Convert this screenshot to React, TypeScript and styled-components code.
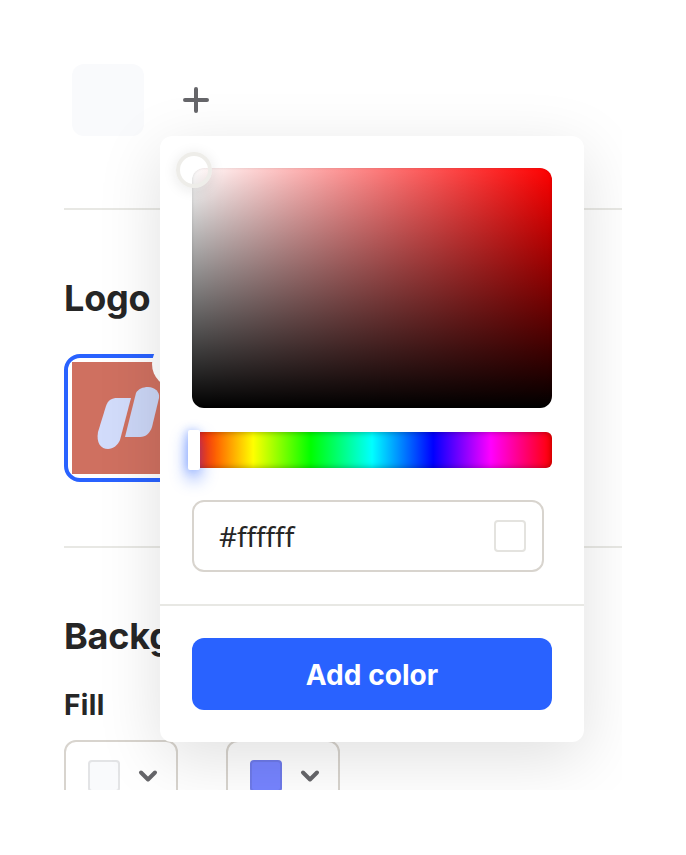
import React from "react";
import styled, { createGlobalStyle } from "styled-components";

const Global = createGlobalStyle`
  html, body { margin: 0; padding: 0; background: #fff; }
  body { font-family: Inter, "Liberation Sans", sans-serif; color: #262626; }
`;

const Page = styled.div`
  position: relative;
  width: 622px;
  height: 790px;
  overflow: hidden;
  background: #fff;
  padding: 64px 0 0 64px;
  box-sizing: border-box;
`;

const ColorRow = styled.div`
  display: flex;
  align-items: center;
  gap: 37px;
  padding-left: 8px;
`;

const ColorSwatch = styled.div`
  width: 72px;
  height: 72px;
  border-radius: 12px;
  background: #f9fafc;
`;

const PlusIcon = styled.svg`
  width: 30px;
  height: 30px;
  display: block;
`;

const Divider = styled.div<{ $top: number }>`
  height: 2px;
  background: #e8e8e4;
  margin-top: ${(p) => p.$top}px;
`;

const Heading = styled.h2<{ $top: number }>`
  margin: ${(p) => p.$top}px 0 0;
  font-size: 36px;
  line-height: 40px;
  font-weight: 700;
  letter-spacing: -0.2px;
  color: #262626;
`;

const LogoFrame = styled.div`
  width: 128px;
  height: 128px;
  margin-top: 36px;
  box-sizing: border-box;
  border: 4px solid #2962ff;
  border-radius: 16px;
  padding: 4px;
`;

const LogoImage = styled.div`
  width: 100%;
  height: 100%;
  display: flex;
  align-items: center;
  justify-content: center;
  background: #cf7060;
`;

const LogoMark = styled.svg`
  width: 66px;
  height: 66px;
  display: block;
`;

const DeleteBadge = styled.div`
  position: absolute;
  left: 152px;
  top: 340px;
  width: 48px;
  height: 48px;
  border-radius: 50%;
  background: #fff;
`;

const FillLabel = styled.div`
  margin-top: 33px;
  font-size: 28px;
  line-height: 32px;
  font-weight: 700;
  letter-spacing: 0.4px;
`;

const FillRow = styled.div`
  display: flex;
  gap: 48px;
  margin-top: 19px;
`;

const FillSelect = styled.div`
  width: 114px;
  height: 72px;
  box-sizing: border-box;
  border: 2px solid #d8d4ce;
  border-radius: 12px;
  padding: 0 17px 0 22px;
  display: flex;
  align-items: center;
  justify-content: space-between;
`;

const FillChip = styled.div<{ $color: string }>`
  width: 32px;
  height: 32px;
  box-sizing: border-box;
  border-radius: 4px;
  background: ${(p) => p.$color};
  border: 2px solid rgba(40, 40, 40, 0.1);
`;

const Chevron = styled.svg`
  width: 22px;
  height: 14px;
  display: block;
`;

const Popover = styled.div`
  position: absolute;
  left: 160px;
  top: 136px;
  width: 424px;
  height: 606px;
  box-sizing: border-box;
  background: #fff;
  border-radius: 12px;
  box-shadow: 0 16px 64px rgba(0, 0, 0, 0.125);
  padding: 32px 0;
  display: flex;
  flex-direction: column;
`;

const PickerBody = styled.div`
  padding: 0 32px;
`;

const Saturation = styled.div`
  position: relative;
  height: 240px;
  border-radius: 12px;
  background: linear-gradient(to top, #000, rgba(0, 0, 0, 0)),
    linear-gradient(to right, #fff, #f00);
  box-shadow: inset 0 0 3px rgba(0, 0, 0, 0.14);
`;

const SatThumb = styled.div`
  position: absolute;
  left: -16px;
  top: -16px;
  width: 36px;
  height: 36px;
  box-sizing: border-box;
  border-radius: 50%;
  border: 4px solid #eeede9;
  box-shadow: 0 2px 14px rgba(25, 25, 25, 0.1);
`;

const Hue = styled.div`
  position: relative;
  height: 36px;
  margin-top: 24px;
  border-radius: 6px;
  background: linear-gradient(
    to right,
    #f00 0%,
    #ff0 17%,
    #0f0 33%,
    #0ff 50%,
    #00f 67%,
    #f0f 83%,
    #f00 100%
  );
  box-shadow: inset 0 0 6px rgba(0, 0, 0, 0.35);
`;

const HueThumb = styled.div`
  position: absolute;
  left: -4px;
  top: -2px;
  width: 12px;
  height: 40px;
  border-radius: 2px;
  background: #fff;
  box-shadow: 0 8px 16px 2px rgba(41, 98, 255, 0.4), -2px 0 8px rgba(41, 98, 255, 0.3);
`;

const HexField = styled.div`
  width: 352px;
  height: 72px;
  margin-top: 32px;
  box-sizing: border-box;
  border: 2px solid #d8d4ce;
  border-radius: 12px;
  padding: 0 16px 0 25px;
  display: flex;
  align-items: center;
  justify-content: space-between;
`;

const HexText = styled.span`
  font-family: "Noto Sans", "Open Sans", sans-serif;
  font-size: 28px;
  color: #262626;
  letter-spacing: -0.1px;
`;

const HexChip = styled.div`
  width: 32px;
  height: 32px;
  box-sizing: border-box;
  border-radius: 4px;
  background: #fff;
  border: 2px solid #e4e3df;
`;

const PopDivider = styled.div`
  height: 2px;
  background: #e8e8e4;
  margin-top: 32px;
`;

const AddButton = styled.button`
  display: block;
  width: 360px;
  height: 72px;
  margin: 32px 32px 0;
  padding: 2px 0 0;
  border: 0;
  border-radius: 12px;
  background: #2962ff;
  color: #fff;
  font-family: Inter, "Liberation Sans", sans-serif;
  font-size: 28px;
  font-weight: 700;
  letter-spacing: 0.05px;
`;

const ChevronIcon = () => (
  <Chevron viewBox="0 0 22 14">
    <path d="M4 3.5l7 7 7-7" fill="none" stroke="#66666a" strokeWidth="4" strokeLinecap="round" strokeLinejoin="round" />
  </Chevron>
);

export default function App() {
  return (
    <Page>
      <Global />
      <ColorRow>
        <ColorSwatch />
        <PlusIcon viewBox="0 0 30 30">
          <path d="M15 4v22M4 15h22" fill="none" stroke="#66666a" strokeWidth="4" strokeLinecap="round" />
        </PlusIcon>
      </ColorRow>
      <Divider $top={72} />
      <Heading $top={68}>Logo</Heading>
      <LogoFrame>
        <LogoImage>
          <LogoMark viewBox="0 0 66 66">
            <path
              d="M36 13 L25 55 C23 60 18 64 13 64 C6 64 1 58 3 47 L11 21 C13 15 17 13 22 13 Z"
              fill="#d2dcfb"
            />
            <path
              d="M30 52 L41 8 C43 4 48 2 53 2 C60 2 65 7 64 13 L57 42 C55 48 51 52 45 52 Z"
              fill="#cbd6f6"
            />
          </LogoMark>
        </LogoImage>
      </LogoFrame>
      <Divider $top={64} />
      <Heading $top={68}>Background</Heading>
      <FillLabel>Fill</FillLabel>
      <FillRow>
        <FillSelect>
          <FillChip $color="#f9fafc" />
          <ChevronIcon />
        </FillSelect>
        <FillSelect>
          <FillChip $color="#7684ff" />
          <ChevronIcon />
        </FillSelect>
      </FillRow>
      <DeleteBadge />
      <Popover>
        <PickerBody>
          <Saturation>
            <SatThumb />
          </Saturation>
          <Hue>
            <HueThumb />
          </Hue>
          <HexField>
            <HexText>#ffffff</HexText>
            <HexChip />
          </HexField>
        </PickerBody>
        <PopDivider />
        <AddButton>Add color</AddButton>
      </Popover>
    </Page>
  );
}
